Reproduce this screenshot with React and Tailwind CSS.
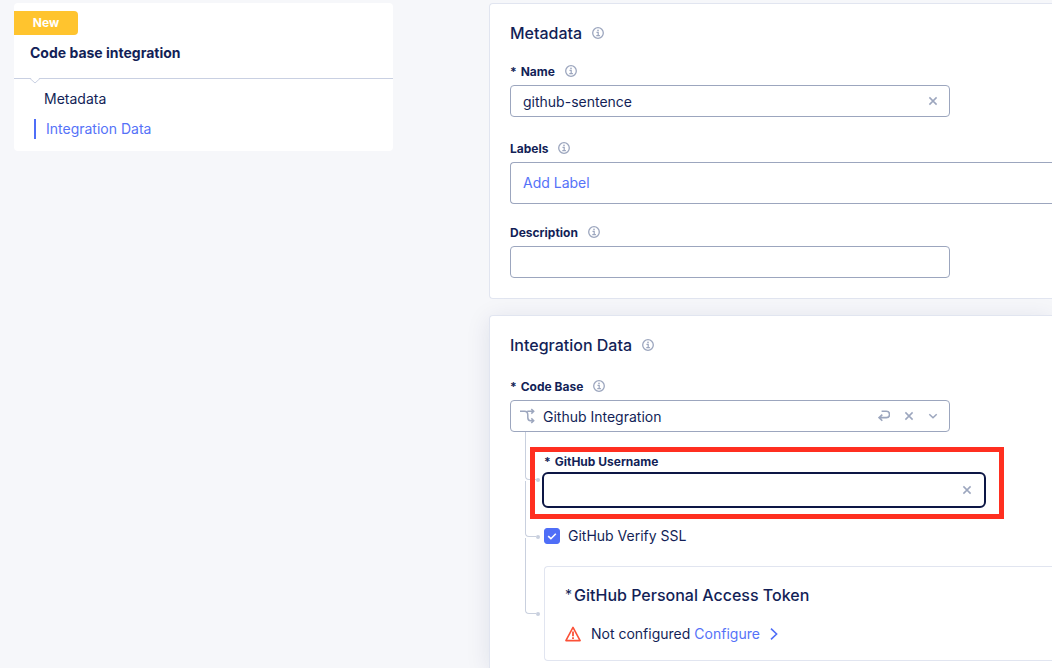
import React, { useState } from "react";

function InfoIcon() {
  return (
    <svg width="12" height="12" viewBox="0 0 12 12" fill="none" stroke="#9ca6be" className="shrink-0" aria-hidden="true">
      <circle cx="6" cy="6" r="5.3" strokeWidth="1.3" />
      <path d="M4.5 5.4H6.2V8.6M4.3 8.7H7.9" strokeWidth="1.2" />
      <circle cx="6" cy="3.4" r="0.8" fill="#9ca6be" stroke="none" />
    </svg>
  );
}

function CrossIcon() {
  return (
    <svg width="10" height="10" viewBox="0 0 10 10" fill="none" stroke="#9ca6be" strokeWidth="1.5" aria-hidden="true">
      <path d="M1.4 1.4L8.6 8.6M8.6 1.4L1.4 8.6" />
    </svg>
  );
}

function ReturnIcon() {
  return (
    <svg width="12" height="12" viewBox="0 0 12 12" fill="none" stroke="#9ca6be" strokeWidth="1.6" aria-hidden="true">
      <path d="M3.6 1.3H8.4A2.9 2.9 0 0 1 8.4 7.6H1.4M4.3 4.6L1.1 7.6L4.3 10.8" />
    </svg>
  );
}

function ChevronDownIcon() {
  return (
    <svg width="10" height="10" viewBox="0 0 10 10" fill="none" stroke="#9ca6be" strokeWidth="1.5" className="pointer-events-none shrink-0" aria-hidden="true">
      <path d="M1.3 3.2L5 6.8L8.7 3.2" />
    </svg>
  );
}

function FlowIcon() {
  return (
    <svg width="15" height="16" viewBox="0 0 15 16" fill="none" stroke="#9ca6be" strokeWidth="1.5" className="shrink-0" aria-hidden="true">
      <path d="M0 3.3H4.5C7.5 3.3 7.8 5 7.8 7V9.5C7.8 11.8 8.8 12.7 10.5 12.7H13.4M7.3 3.3H13.4M11.3 1L13.7 3.3L11.3 5.6M11.3 10.4L13.7 12.7L11.3 15" />
    </svg>
  );
}

function WarningIcon() {
  return (
    <svg width="16" height="16" viewBox="0 0 16 16" fill="none" stroke="#fb5138" strokeWidth="1.6" className="shrink-0" aria-hidden="true">
      <path d="M8 1.4L15.1 14.6H0.9Z" strokeLinejoin="round" />
      <path d="M8 5.6V10.2M8 11.2V12.9" strokeWidth="1.8" />
    </svg>
  );
}

function FieldLabel({ htmlFor, required, info = true, children }) {
  return (
    <div className="flex h-5 items-center gap-2.5">
      <label htmlFor={htmlFor} className="flex gap-1 pt-px text-xs font-bold">
        {required && <span>*</span>}
        {children}
      </label>
      {info && <InfoIcon />}
    </div>
  );
}

function CardTitle({ children }) {
  return (
    <div className="flex h-5 items-center gap-2.5">
      <h2 className="text-base leading-5 font-medium">{children}</h2>
      <InfoIcon />
    </div>
  );
}

function Connector({ className }) {
  return (
    <span aria-hidden="true" className={`absolute left-0 w-[11px] rounded-bl border-b border-l border-[#c9d0de] ${className}`}>
      <span className="absolute -right-1 -bottom-[3px] size-1 rounded-full bg-[#c9d0de]" />
    </span>
  );
}

export default function App() {
  const [name, setName] = useState("github-sentence");
  const [username, setUsername] = useState("");
  const [description, setDescription] = useState("");

  return (
    <div className="flex min-h-screen items-stretch gap-24 overflow-hidden bg-[#f6f7fa] pt-[3px] pl-3.5 font-['Inter',sans-serif] text-sm text-[#131f57]">
      <aside className="w-[379px] shrink-0 self-start rounded bg-white pt-2">
        <div className="flex h-6 w-16 items-center justify-center rounded-r bg-[#ffc42e] text-xs font-bold text-white">New</div>
        <h1 className="flex h-9 items-center pl-4 font-bold">Code base integration</h1>
        <div className="relative mt-[7px] border-t border-[#c9d0e2]">
          <svg width="10" height="6" viewBox="0 0 10 6" className="absolute -top-px left-4" aria-hidden="true">
            <path d="M0.5 0H9.5L5 4.5Z" fill="white" />
            <path d="M0 0.5L5 5L10 0.5" fill="none" stroke="#c9d0e2" />
          </svg>
        </div>
        <nav className="flex flex-col gap-2.5 pt-2.5 pb-3 pl-5">
          <a href="#metadata" className="pl-2.5 leading-5">Metadata</a>
          <a href="#integration-data" className="border-l-2 border-[#4f6ef7] pl-2.5 leading-5 text-[#5572f8]">Integration Data</a>
        </nav>
      </aside>

      <main className="flex min-w-0 flex-1 flex-col gap-4">
        <section id="metadata" className="rounded-l border-y border-l border-[#e1e5f0] bg-white pt-[19px] pb-5 pl-5">
          <CardTitle>Metadata</CardTitle>
          <div className="mt-[18px] flex flex-col gap-1">
            <FieldLabel htmlFor="name" required>Name</FieldLabel>
            <div className="flex h-8 w-[440px] items-center rounded border border-[#9ca6be] pr-[11px] pl-3">
              <input id="name" value={name} onChange={(e) => setName(e.target.value)} className="min-w-0 flex-1 pt-0.5 outline-none" />
              <button type="button" aria-label="Clear name" onClick={() => setName("")}><CrossIcon /></button>
            </div>
          </div>
          <div className="mt-[21px] flex flex-col gap-1">
            <FieldLabel htmlFor="labels">Labels</FieldLabel>
            <div className="flex h-[42px] items-center rounded-l border-y border-l border-[#9ca6be] pl-3">
              <button id="labels" type="button" className="text-[#5572f8]">Add Label</button>
            </div>
          </div>
          <div className="mt-[18px] flex flex-col gap-1">
            <FieldLabel htmlFor="description">Description</FieldLabel>
            <input id="description" value={description} onChange={(e) => setDescription(e.target.value)} className="h-8 w-[440px] rounded border border-[#9ca6be] px-3 outline-none" />
          </div>
        </section>

        <section id="integration-data" className="flex-1 rounded-tl border-t border-l border-[#e1e5f0] bg-white pt-[19px] pl-5 shadow-[0_4px_24px_rgba(19,31,87,0.1)]">
          <CardTitle>Integration Data</CardTitle>
          <div className="mt-[21px] flex flex-col gap-1">
            <FieldLabel htmlFor="code-base" required>Code Base</FieldLabel>
            <div className="flex h-8 w-[440px] items-center rounded border border-[#9ca6be] pr-[11px] pl-[9px]">
              <FlowIcon />
              <select id="code-base" className="ml-2 min-w-0 flex-1 appearance-none bg-transparent pt-0.5 outline-none">
                <option>Github Integration</option>
              </select>
              <div className="flex items-center gap-[14px]">
                <button type="button" aria-label="Reset"><ReturnIcon /></button>
                <button type="button" aria-label="Clear code base"><CrossIcon /></button>
                <ChevronDownIcon />
              </div>
            </div>
          </div>

          <ul className="ml-[15px]">
            <li className="relative pt-[19px] pl-[19px]">
              <Connector className="top-0 h-12" />
              <div className="relative flex w-[440px] flex-col gap-[3px]">
                <FieldLabel htmlFor="username" required info={false}>GitHub Username</FieldLabel>
                <div className="flex h-8 items-center rounded bg-white pr-3 pl-3 outline-2 outline-[#0d1745]">
                  <input id="username" value={username} onChange={(e) => setUsername(e.target.value)} className="min-w-0 flex-1 outline-none" />
                  <button type="button" aria-label="Clear username" onClick={() => setUsername("")}><CrossIcon /></button>
                </div>
                <div aria-hidden="true" className="pointer-events-none absolute -top-1 -right-5 -bottom-[13px] -left-3.5 border-5 border-[#ff2f20]" />
              </div>
            </li>
            <li className="relative pt-[22px] pl-[19px]">
              <Connector className="-top-[25px] h-14" />
              <label className="flex h-4 items-center gap-2">
                <span className="relative flex size-4">
                  <input type="checkbox" defaultChecked className="peer size-4 appearance-none rounded-[3px] border border-[#4f6ef7] checked:bg-[#4f6ef7]" />
                  <svg viewBox="0 0 16 16" fill="none" stroke="white" strokeWidth="1.6" className="pointer-events-none absolute inset-0 hidden peer-checked:block" aria-hidden="true">
                    <path d="M4.2 8.2L6.9 10.7L11.8 5.8" />
                  </svg>
                </span>
                GitHub Verify SSL
              </label>
            </li>
            <li className="relative pt-[22px] pl-[19px]">
              <Connector className="-top-1.5 h-[76px]" />
              <div className="rounded-l border-y border-l border-[#e1e5f0] pt-[18px] pb-4 pl-5">
                <h3 className="flex gap-0.5 text-base leading-5 font-medium">
                  <span className="text-sm leading-5 font-normal">*</span>
                  GitHub Personal Access Token
                </h3>
                <div className="mt-[19px] flex h-5 items-center">
                  <WarningIcon />
                  <span className="ml-2.5">Not configured</span>
                  <a href="#configure" className="ml-1 flex items-center gap-2.5 text-[#5572f8]">
                    Configure
                    <svg width="8" height="12" viewBox="0 0 8 12" fill="none" stroke="#4f6ef7" strokeWidth="1.6" aria-hidden="true">
                      <path d="M1 0.7L6.6 6L1 11.3" />
                    </svg>
                  </a>
                </div>
              </div>
            </li>
          </ul>
        </section>
      </main>
    </div>
  );
}
